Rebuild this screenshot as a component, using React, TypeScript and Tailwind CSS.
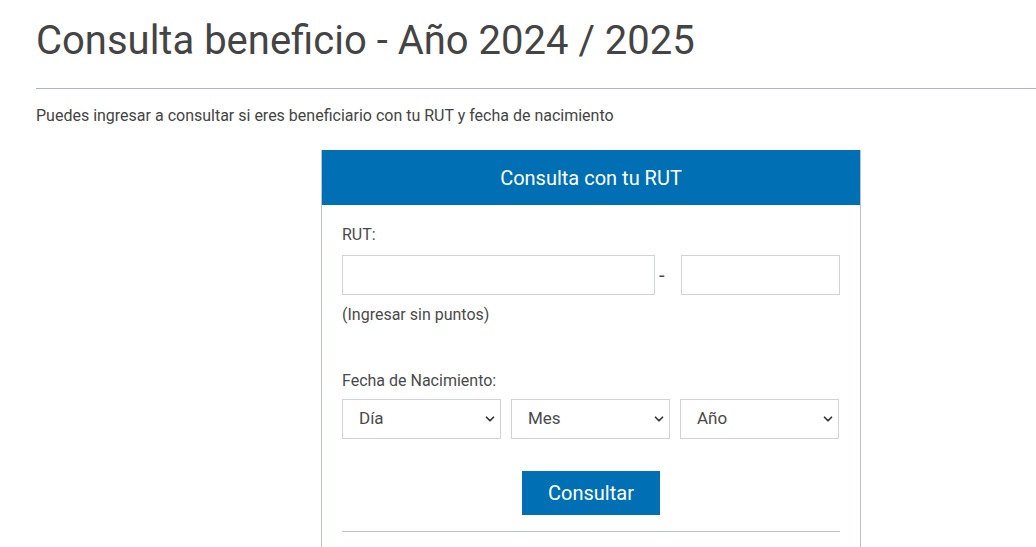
import React from 'react';
import { ChevronDown } from 'lucide-react';

const selects = ['Día', 'Mes', 'Año'];

function Select({ label }: { label: string }) {
  return (
    <div className="relative w-[159px]">
      <select className="h-10 w-full appearance-none border border-[#cfd3d8] bg-white pl-4 text-[17px] text-[#4a4a4a] outline-none">
        <option>{label}</option>
      </select>
      <ChevronDown className="pointer-events-none absolute right-[4px] top-[13px] h-[14px] w-[14px] text-[#333]" strokeWidth={3} />
    </div>
  );
}

export default function App() {
  return (
    <div className="min-h-[547px] overflow-hidden bg-white font-['Roboto',sans-serif] text-[#4a4a4a]">
      <div className="pl-9">
        <h1 className="pt-[17px] text-[40px] leading-[48px] text-[#444]">Consulta beneficio - Año 2024 / 2025</h1>
        <div className="mt-[23px] h-px w-[1100px] bg-[#a7b6c8]" />
        <p className="mt-[15px] text-[16px] leading-6 text-[#444]">
          Puedes ingresar a consultar si eres beneficiario con tu RUT y fecha de nacimiento
        </p>

        <div className="ml-[285px] mt-[22px] w-[540px] border border-[#b9c3cf] border-t-0">
          <div className="flex h-[55px] items-center justify-center bg-[#006fb3] text-[20px] text-white">
            Consulta con tu RUT
          </div>
          <div className="px-5 pt-[18px] pb-4">
            <div className="text-[16px] leading-6">RUT:</div>
            <div className="mt-[8px] flex items-center">
              <input className="h-10 w-[314px] border border-[#cfd3d8] outline-none" />
              <span className="w-[26px] pl-[4px] text-left text-[20px]">-</span>
              <input className="h-10 w-[159px] border border-[#cfd3d8] outline-none" />
            </div>
            <div className="mt-[8px] text-[16px] leading-6">(Ingresar sin puntos)</div>

            <div className="mt-[42px] text-[16px] leading-6">Fecha de Nacimiento:</div>
            <div className="mt-[6px] flex gap-[10px]">
              {selects.map((s) => (
                <Select key={s} label={s} />
              ))}
            </div>

            <div className="mt-[32px] flex justify-center">
              <button className="h-[44px] w-[138px] bg-[#006fb3] text-[20px] text-white">Consultar</button>
            </div>
            <div className="mt-[16px] h-px bg-[#b9c3cf]" />
            <div className="h-10" />
          </div>
        </div>
      </div>
    </div>
  );
}
